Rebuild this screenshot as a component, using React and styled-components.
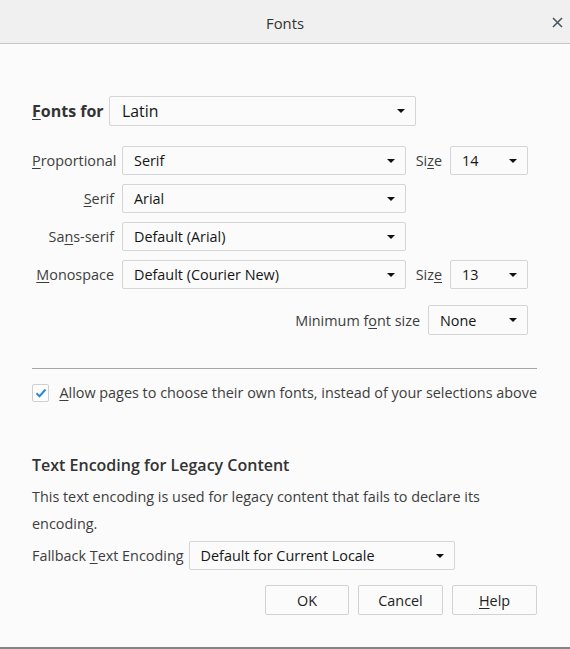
import React from "react";
import styled, { createGlobalStyle } from "styled-components";

const GlobalStyle = createGlobalStyle`
  html, body {
    margin: 0;
    padding: 0;
    background: #fbfbfb;
  }
  body {
    font-family: "Open Sans", "Liberation Sans", sans-serif;
    font-size: 14.4px;
    color: #3d3d3d;
  }
`;

/* ======================
   WINDOW
====================== */

const Window = styled.div`
  width: 570px;
  height: 649px;
  box-sizing: border-box;
  background: #fbfbfb;
  border-bottom: 2px solid #858585;
  display: flex;
  flex-direction: column;
`;

const TitleBar = styled.div`
  height: 44px;
  box-sizing: border-box;
  padding-top: 3px;
  flex-shrink: 0;
  background: #f0f0f0;
  border-bottom: 1px solid #c6c6c6;
  display: flex;
  align-items: center;
  justify-content: center;
  position: relative;
  font-size: 14.8px;
  color: #333;
`;

const CloseButton = styled.button`
  position: absolute;
  right: 4px;
  top: 13px;
  width: 18px;
  height: 18px;
  border: 0;
  padding: 0;
  background: transparent;
  display: flex;
  align-items: center;
  justify-content: center;
`;

const Body = styled.div`
  padding: 52px 33px 0 32px;
  display: flex;
  flex-direction: column;
`;

/* ======================
   DROPDOWNS
====================== */

const Select = styled.div`
  box-sizing: border-box;
  width: ${(p) => p.$w}px;
  height: ${(p) => p.$h || 29}px;
  border: 1px solid #d5d5d5;
  border-radius: 2px;
  background: #fbfbfb;
  display: flex;
  align-items: center;
  justify-content: space-between;
  padding: 0 10px 0 ${(p) => p.$pl || 11}px;
  font-size: ${(p) => (p.$big ? 15.8 : 14.4)}px;
  color: #151515;
`;

const Arrow = styled.span`
  width: 0;
  height: 0;
  border-left: 4px solid transparent;
  border-right: 4px solid transparent;
  border-top: 4px solid #111;
`;

const Dropdown = ({ value, width, height, big, pl }) => (
  <Select $w={width} $h={height} $big={big} $pl={pl}>
    <span>{value}</span>
    <Arrow />
  </Select>
);

/* ======================
   FONTS SECTION
====================== */

const LangRow = styled.div`
  display: flex;
  align-items: center;
  gap: 8px;
`;

const LangLabel = styled.span`
  font-size: 16px;
  font-weight: 700;
  color: #333;
  width: 69px;
  white-space: nowrap;
`;

const Key = styled.span`
  text-decoration: underline;
  text-underline-offset: 2px;
`;

const FontGrid = styled.div`
  margin-top: 20px;
  display: grid;
  grid-template-columns: 82px 284px 28px 78px;
  column-gap: 8px;
  row-gap: 9px;
  align-items: center;
`;

const Label = styled.span`
  text-align: ${(p) => (p.$left ? "left" : "right")};
  white-space: nowrap;
  color: #3d3d3d;
`;

const MinRow = styled.div`
  margin-top: 16px;
  width: 496px;
  display: flex;
  justify-content: flex-end;
  align-items: center;
  gap: 8px;
`;

const Separator = styled.hr`
  margin: 33px 0 0;
  border: 0;
  border-top: 1px solid #a6a6a6;
  width: 505px;
`;

const CheckRow = styled.label`
  margin-top: 14px;
  display: flex;
  align-items: center;
  gap: 10px;
  white-space: nowrap;
`;

const Box = styled.span`
  box-sizing: border-box;
  width: 18px;
  height: 18px;
  border: 1px solid #cfcfcf;
  border-radius: 2px;
  background: #fff;
  display: flex;
  align-items: center;
  justify-content: center;
`;

/* ======================
   ENCODING SECTION
====================== */

const Heading = styled.h2`
  margin: 52px 0 0;
  font-size: 16px;
  font-weight: 600;
  color: #333;
  line-height: 22px;
`;

const Paragraph = styled.p`
  margin: 7px 0 0;
  line-height: 27px;
  width: 470px;
`;

const EncodingRow = styled.div`
  margin-top: 4px;
  display: flex;
  align-items: center;
  gap: 5px;
`;

const ButtonRow = styled.div`
  margin-top: 15px;
  display: flex;
  justify-content: flex-end;
  gap: 9px;
`;

const Button = styled.button`
  box-sizing: border-box;
  width: ${(p) => p.$w}px;
  height: 30px;
  border: 1px solid #d2d2d2;
  border-radius: 2px;
  background: #fbfbfb;
  font-family: inherit;
  font-size: 14.4px;
  color: #222;
  padding: 0;
`;

export default function App() {
  return (
    <>
      <GlobalStyle />
      <Window>
        <TitleBar>
          Fonts
          <CloseButton aria-label="Close">
            <svg width="11" height="11" viewBox="0 0 11 11">
              <path d="M1 1L10 10M10 1L1 10" stroke="#4b5660" strokeWidth="1.6" />
            </svg>
          </CloseButton>
        </TitleBar>
        <Body>
          <LangRow>
            <LangLabel>
              <Key>F</Key>onts for
            </LangLabel>
            <Dropdown value="Latin" width={307} height={30} big pl={12} />
          </LangRow>

          <FontGrid>
            <Label $left>
              <Key>P</Key>roportional
            </Label>
            <Dropdown value="Serif" width={284} />
            <Label>
              Si<Key>z</Key>e
            </Label>
            <Dropdown value="14" width={78} />

            <Label>
              <Key>S</Key>erif
            </Label>
            <Dropdown value="Arial" width={284} />
            <span />
            <span />

            <Label>
              Sa<Key>n</Key>s-serif
            </Label>
            <Dropdown value="Default (Arial)" width={284} />
            <span />
            <span />

            <Label>
              <Key>M</Key>onospace
            </Label>
            <Dropdown value="Default (Courier New)" width={284} />
            <Label>
              Siz<Key>e</Key>
            </Label>
            <Dropdown value="13" width={78} />
          </FontGrid>

          <MinRow>
            <Label>
              Minimum f<Key>o</Key>nt size
            </Label>
            <Dropdown value="None" width={100} height={30} />
          </MinRow>

          <Separator />

          <CheckRow>
            <Box>
              <svg width="12" height="10" viewBox="0 0 12 10">
                <path d="M1.5 5.2L4.5 8.2L10.5 1.5" fill="none" stroke="#2b8ad8" strokeWidth="2" />
              </svg>
            </Box>
            <span>
              <Key>A</Key>llow pages to choose their own fonts, instead of your selections above
            </span>
          </CheckRow>

          <Heading>Text Encoding for Legacy Content</Heading>
          <Paragraph>
            This text encoding is used for legacy content that fails to declare its encoding.
          </Paragraph>
          <EncodingRow>
            <Label $left>
              Fallback <Key>T</Key>ext Encoding
            </Label>
            <Dropdown value="Default for Current Locale" width={266} height={29} />
          </EncodingRow>

          <ButtonRow>
            <Button $w={84}>OK</Button>
            <Button $w={85}>Cancel</Button>
            <Button $w={85}>
              <Key>H</Key>elp
            </Button>
          </ButtonRow>
        </Body>
      </Window>
    </>
  );
}
